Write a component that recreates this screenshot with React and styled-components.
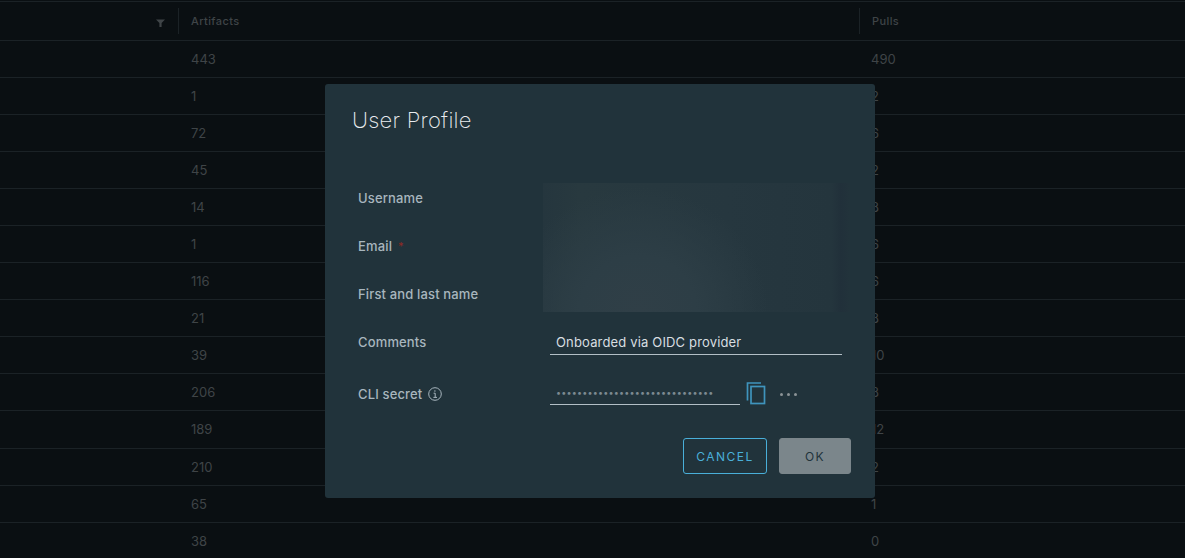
import React from 'react'
import styled, { createGlobalStyle } from 'styled-components'

const GlobalStyle = createGlobalStyle`
  html, body {
    margin: 0;
    padding: 0;
    height: 100%;
    background: #0a0f12;
    overflow: hidden;
    font-family: Inter, 'Noto Sans', sans-serif;
  }
`

const artifacts = [443, 1, 72, 45, 14, 1, 116, 21, 39, 206, 189, 210, 65, 38]
const pulls = [490, 2, 6, 2, 8, 6, 6, 8, 10, 8, 12, 2, 1, 0]

const Page = styled.div`
  position: relative;
  width: 1185px;
  height: 558px;
  overflow: hidden;
  background: #0a0f12;
  padding-top: 1px;
  box-sizing: border-box;
`

const Table = styled.div`
  border-top: 1px solid #1b2226;
`

const HeadRow = styled.div`
  display: grid;
  grid-template-columns: 178px 681px 1fr;
  height: 38px;
  align-items: center;
  border-bottom: 1px solid #1b2226;
  color: #3f4447;
  font-size: 11px;
  font-weight: 500;
  letter-spacing: 0.4px;
`

const HeadCell = styled.div`
  display: flex;
  align-items: center;
  justify-content: ${({ $end }) => ($end ? 'flex-end' : 'flex-start')};
  height: 26px;
  padding: 0 ${({ $end }) => ($end ? '14px' : '12px')};
  border-left: ${({ $first }) => ($first ? 'none' : '1px solid #1b2226')};
  box-sizing: border-box;
`

const Row = styled.div`
  display: grid;
  grid-template-columns: 178px 681px 1fr;
  height: 36.05px;
  align-items: center;
  border-bottom: 1px solid #1b2226;
  color: #3f4447;
  font-size: 13px;
`

const Cell = styled.div`
  padding-left: ${({ $last }) => ($last ? '12px' : '13px')};
`

const Overlay = styled.div`
  position: absolute;
  left: 325px;
  top: 84px;
  width: 550px;
  height: 414px;
  box-sizing: border-box;
  padding: 22px 24px 24px 27px;
  display: flex;
  flex-direction: column;
  background: #21333b;
  border-radius: 3px;
`

const Title = styled.h3`
  margin: 0;
  font-size: 22px;
  line-height: 28px;
  font-weight: 200;
  letter-spacing: 0.25px;
  color: #e9ecef;
`

const Form = styled.div`
  margin-top: 40px;
  padding-left: 6px;
  display: flex;
  flex-direction: column;
`

const FormRow = styled.div`
  display: grid;
  grid-template-columns: 192px 1fr;
  height: 48px;
  margin-top: ${({ $spaced }) => ($spaced ? '4px' : '0')};
  align-items: center;
`

const Label = styled.label`
  display: flex;
  align-items: center;
  gap: 5px;
  color: #a8b6be;
  font-size: 13px;
  font-weight: 500;
  letter-spacing: 0.15px;
`

const Required = styled.span`
  color: #8a2a26;
  font-size: 11px;
  margin-left: 1px;
`

const Blur = styled.div`
  position: absolute;
  left: 218px;
  top: 99px;
  width: 307px;
  height: 129px;
  background:
    radial-gradient(ellipse 130px 125px at 95px 129px, #303f47 0%, #2d3e46 45%, rgba(37, 54, 62, 0) 100%),
    linear-gradient(90deg, #25363e 0%, #28393f 12%, #26373f 60%, #24353d 94%, #21303a 97%, #22333b 100%);
`

const TextValue = styled.div`
  width: 292px;
  box-sizing: border-box;
  padding: 0 6px;
  height: 25px;
  line-height: 24px;
  border-bottom: 1px solid #b3bfc6;
  color: #d8dee1;
  font-size: 13px;
  letter-spacing: 0.16px;
`

const SecretWrap = styled.div`
  display: flex;
  align-items: center;
`

const SecretValue = styled.div`
  width: 190px;
  box-sizing: border-box;
  padding-left: 6px;
  height: 22px;
  line-height: 20px;
  border-bottom: 1px solid #b3bfc6;
  color: #7d8a91;
  font-size: 9px;
  letter-spacing: 0.19px;
  white-space: nowrap;
`

const CopyIcon = styled.svg`
  width: 20px;
  height: 24px;
  margin-left: 6px;
  fill: none;
  stroke: #3f94bd;
  stroke-width: 1.7;
`

const Dots = styled.div`
  display: flex;
  gap: 4px;
  margin-left: 14px;
`

const Dot = styled.span`
  width: 3px;
  height: 3px;
  border-radius: 50%;
  background: #8b9396;
`

const Footer = styled.div`
  margin-top: auto;
  display: flex;
  justify-content: flex-end;
  gap: 12px;
`

const Button = styled.button`
  height: 36px;
  box-sizing: border-box;
  border-radius: 3px;
  font-family: inherit;
  font-size: 12px;
  font-weight: 400;
  letter-spacing: 1.5px;
  text-transform: uppercase;
  padding: 0;
`

const CancelButton = styled(Button)`
  width: 84px;
  background: transparent;
  border: 1px solid #49afd9;
  color: #49afd9;
`

const OkButton = styled(Button)`
  width: 72px;
  background: #7b868b;
  border: 1px solid #7b868b;
  color: #21333b;
`

const Funnel = styled.svg`
  width: 9px;
  height: 8px;
  margin-top: 4px;
  margin-right: -1px;
`

const InfoGlyph = styled.svg`
  width: 14px;
  height: 14px;
  margin-left: 1px;
  fill: none;
  stroke: #a8b6be;
`

function FilterIcon() {
  return (
    <Funnel viewBox="0 0 9 9" preserveAspectRatio="none">
      <path d="M0 0.5h9L5.6 4.5V9H3.4V4.5z" fill="#3f4447" />
    </Funnel>
  )
}

function InfoIcon() {
  return (
    <InfoGlyph viewBox="0 0 14 14">
      <circle cx="7" cy="7" r="6.3" />
      <path d="M5.6 6.2H7.2V10.4M5.4 10.4H9" />
      <circle cx="6.9" cy="4" r="0.7" fill="#a8b6be" stroke="none" />
    </InfoGlyph>
  )
}

export default function App() {
  return (
    <Page>
      <GlobalStyle />
      <Table>
        <HeadRow>
          <HeadCell $first $end>
            <FilterIcon />
          </HeadCell>
          <HeadCell>Artifacts</HeadCell>
          <HeadCell>Pulls</HeadCell>
        </HeadRow>
        {artifacts.map((count, i) => (
          <Row key={i}>
            <div />
            <Cell>{count}</Cell>
            <Cell $last>{pulls[i]}</Cell>
          </Row>
        ))}
      </Table>
      <Overlay>
        <Title>User Profile</Title>
        <Form>
          <FormRow>
            <Label>Username</Label>
          </FormRow>
          <FormRow>
            <Label>
              Email <Required>*</Required>
            </Label>
          </FormRow>
          <FormRow>
            <Label>First and last name</Label>
          </FormRow>
          <FormRow>
            <Label>Comments</Label>
            <TextValue>Onboarded via OIDC provider</TextValue>
          </FormRow>
          <FormRow $spaced>
            <Label>
              CLI secret <InfoIcon />
            </Label>
            <SecretWrap>
              <SecretValue>{'•'.repeat(30)}</SecretValue>
              <CopyIcon viewBox="0 0 20 24">
                <path d="M15 1H1.5V18.5" />
                <rect x="5" y="4.5" width="13.5" height="17" />
              </CopyIcon>
              <Dots>
                <Dot />
                <Dot />
                <Dot />
              </Dots>
            </SecretWrap>
          </FormRow>
        </Form>
        <Blur />
        <Footer>
          <CancelButton>Cancel</CancelButton>
          <OkButton>OK</OkButton>
        </Footer>
      </Overlay>
    </Page>
  )
}
